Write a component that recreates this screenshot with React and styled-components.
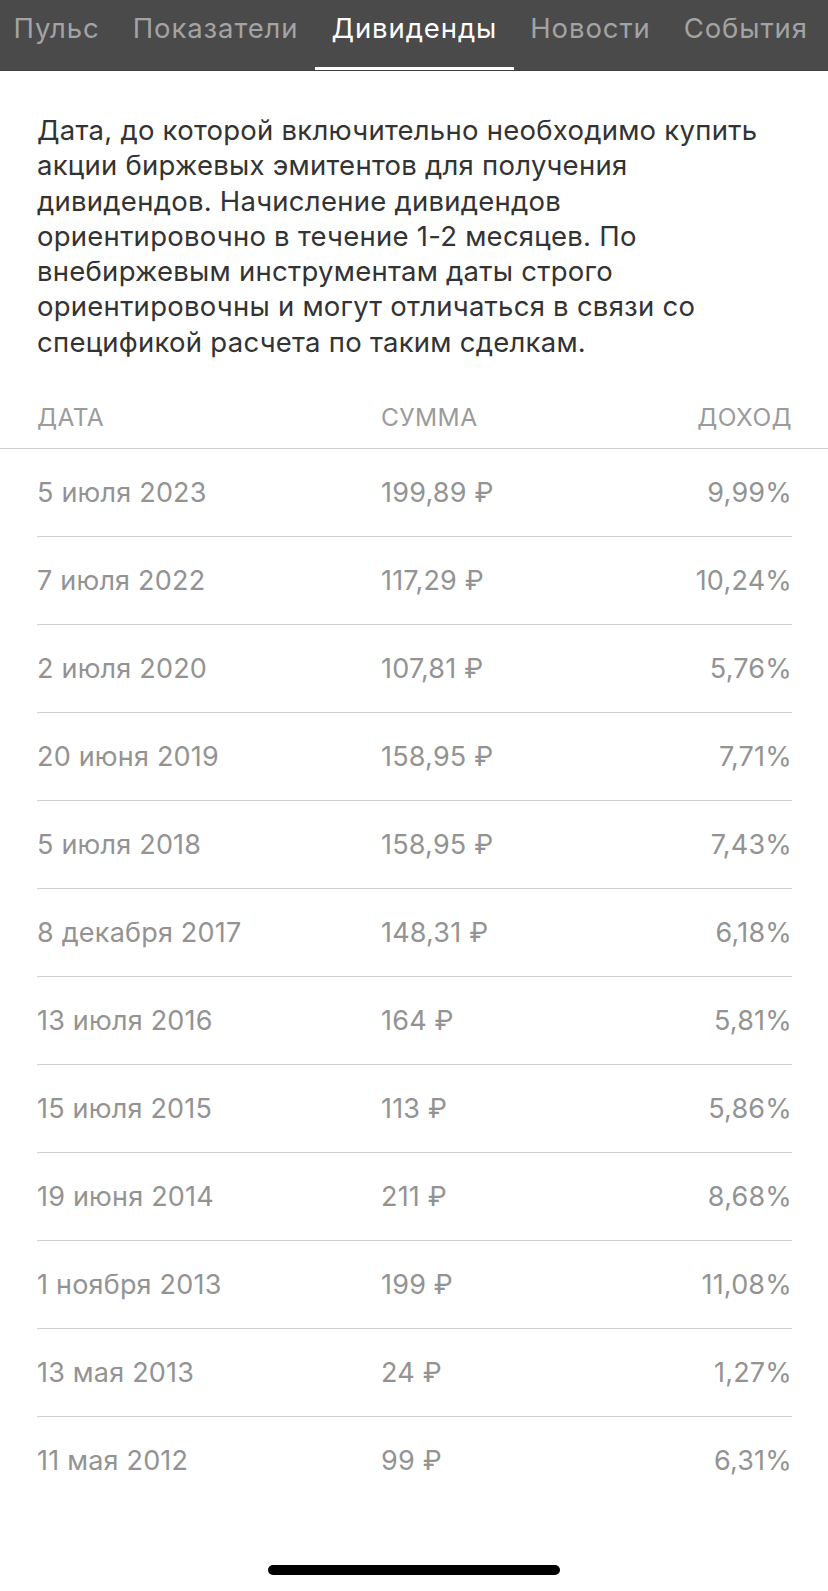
import styled, { createGlobalStyle } from "styled-components";

const GlobalStyle = createGlobalStyle`
  html, body {
    margin: 0;
    padding: 0;
    background: #ffffff;
  }
  body {
    font-family: Inter, "Noto Sans", sans-serif;
    -webkit-font-smoothing: antialiased;
  }
`;

const Screen = styled.div`
  width: 828px;
  min-height: 1591px;
  background: #ffffff;
  display: flex;
  flex-direction: column;
  position: relative;
`;

const TabBar = styled.nav`
  display: flex;
  height: 71px;
  background: #4a4a4a;
  border-bottom: 1px solid #3f3f3f;
  box-sizing: border-box;
  padding-left: 0;
  margin-left: -3px;
  overflow: hidden;
`;

const Tab = styled.div`
  padding: 0 16.5px;
  height: 100%;
  box-sizing: border-box;
  display: flex;
  align-items: flex-start;
  line-height: 56px;
  font-size: 27.5px;
  letter-spacing: 0.9px;
  white-space: nowrap;
  color: ${(props) => (props.$active ? "#ffffff" : "#a3a3a3")};
  border-bottom: 3px solid ${(props) => (props.$active ? "#ffffff" : "transparent")};
`;

const Description = styled.p`
  margin: 42px 0 0;
  padding: 0 30px 0 37px;
  font-size: 27.5px;
  letter-spacing: 0.25px;
  line-height: 35.3px;
  color: #333333;
`;

const HeaderRow = styled.div`
  display: grid;
  grid-template-columns: 344px 1fr auto;
  align-items: center;
  height: 62px;
  margin-top: 26px;
  padding: 0 36px 0 37px;
  border-bottom: 1px solid #cfcfcf;
  font-size: 24.5px;
  letter-spacing: 0.4px;
  color: #9b9b9b;
  text-transform: uppercase;
`;

const Rows = styled.div`
  padding: 0 36px 0 37px;
`;

const Row = styled.div`
  display: grid;
  grid-template-columns: 344px 1fr auto;
  align-items: center;
  height: 88px;
  box-sizing: border-box;
  border-bottom: 1px solid ${(props) => (props.$last ? "transparent" : "#cfcfcf")};
  font-size: 27px;
  letter-spacing: 0.2px;
  color: #939393;
`;

const Right = styled.span`
  text-align: right;
`;

const HomeIndicator = styled.div`
  position: absolute;
  left: 268px;
  bottom: 16px;
  width: 292px;
  height: 10px;
  border-radius: 5px;
  background: #000000;
`;

const tabs = ["Пульс", "Показатели", "Дивиденды", "Новости", "События"];

const dividends = [
  ["5 июля 2023", "199,89 ₽", "9,99%"],
  ["7 июля 2022", "117,29 ₽", "10,24%"],
  ["2 июля 2020", "107,81 ₽", "5,76%"],
  ["20 июня 2019", "158,95 ₽", "7,71%"],
  ["5 июля 2018", "158,95 ₽", "7,43%"],
  ["8 декабря 2017", "148,31 ₽", "6,18%"],
  ["13 июля 2016", "164 ₽", "5,81%"],
  ["15 июля 2015", "113 ₽", "5,86%"],
  ["19 июня 2014", "211 ₽", "8,68%"],
  ["1 ноября 2013", "199 ₽", "11,08%"],
  ["13 мая 2013", "24 ₽", "1,27%"],
  ["11 мая 2012", "99 ₽", "6,31%"],
];

export default function App() {
  return (
    <Screen>
      <GlobalStyle />
      <TabBar>
        {tabs.map((t) => (
          <Tab key={t} $active={t === "Дивиденды"}>
            {t}
          </Tab>
        ))}
      </TabBar>
      <Description>
        Дата, до которой включительно необходимо купить акции биржевых
        эмитентов для получения дивидендов. Начисление дивидендов
        ориентировочно в течение 1-2 месяцев. По внебиржевым инструментам даты
        строго ориентировочны и могут отличаться в связи со спецификой расчета
        по таким сделкам.
      </Description>
      <HeaderRow>
        <span>Дата</span>
        <span>Сумма</span>
        <Right>Доход</Right>
      </HeaderRow>
      <Rows>
        {dividends.map(([date, sum, income], i) => (
          <Row key={date} $last={i === dividends.length - 1}>
            <span>{date}</span>
            <span>{sum}</span>
            <Right>{income}</Right>
          </Row>
        ))}
      </Rows>
      <HomeIndicator />
    </Screen>
  );
}
